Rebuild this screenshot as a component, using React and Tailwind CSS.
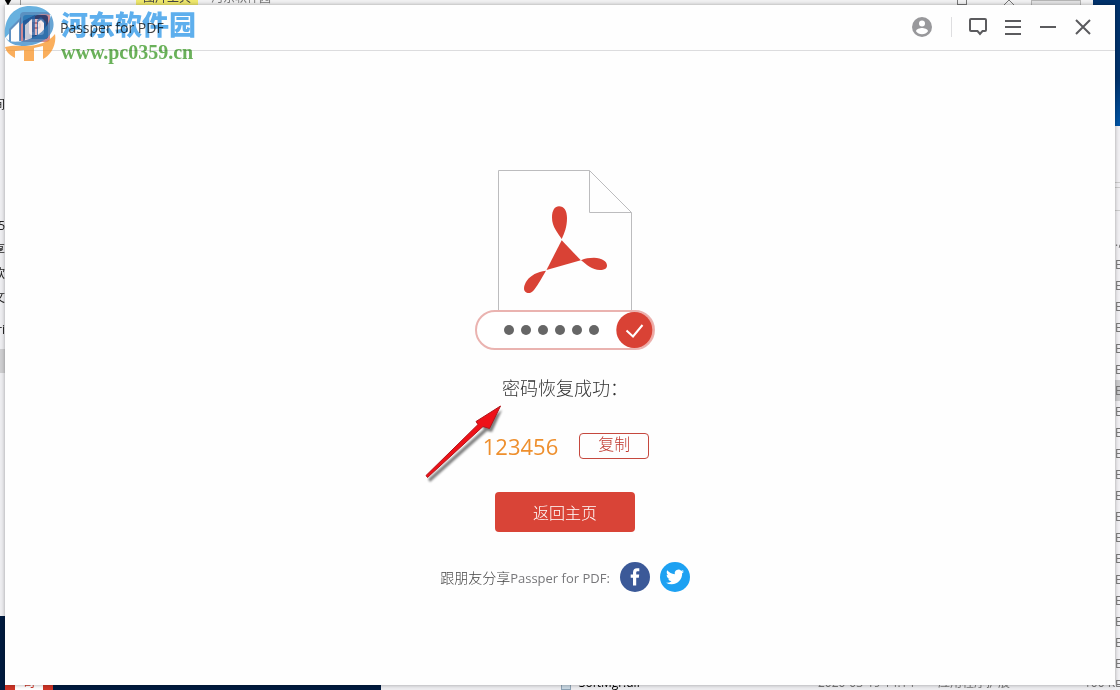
import React, { useState } from 'react';

const PASSWORD = '123456';

const leftFragments = [
  { text: '间', className: 'mt-[88px] h-6' },
  { text: '5', className: 'mt-[97px] h-6' },
  { text: '享', className: 'h-6' },
  { text: '软', className: 'h-6' },
  { text: '文', className: 'h-6' },
  { text: 'ri', className: 'mt-2 h-6' },
];

const sizeRows = Array.from({ length: 21 }, (_, i) => i);

const WindowButton = ({ label, children }) => (
  <button type="button" aria-label={label} className="flex h-[35px] w-[35px] items-center justify-center text-[#5b5b5e]">
    <svg width="20" height="20" viewBox="0 0 20 20" fill="none" stroke="currentColor" strokeWidth="2">
      {children}
    </svg>
  </button>
);

const AppLogo = () => (
  <svg width="30" height="30" viewBox="0 0 30 30" aria-hidden="true">
    <rect width="30" height="30" rx="4" fill="#cf8a93" />
    <rect x="3" y="3" width="25" height="24" rx="3" fill="#33406f" />
    <rect x="9" y="7" width="15" height="16" rx="3" fill="#e3b6bd" />
    <path d="M13 20V11h4.500a2.500 2.500 0 0 1 0 5H13" fill="none" stroke="#b5707f" strokeWidth="2" />
  </svg>
);

const TitleBar = () => (
  <header className="flex h-[46px] items-center border-b border-[#dcdcde] pr-[15px] pb-0.5 pl-[15px]">
    <AppLogo />
    <h1 className="ml-[10px] flex-1 pt-0.5 text-[14px] text-[#444]">Passper for PDF</h1>
    <button type="button" aria-label="Account" className="flex h-[35px] w-[35px] items-center justify-center">
      <svg width="20" height="20" viewBox="0 0 20 20">
        <circle cx="10" cy="10" r="10" fill="#98989b" />
        <circle cx="10" cy="6.500" r="3" fill="#fff" />
        <path d="M4 14.200C4 12 8 11 10 11s6 1 6 3.200C14.700 16.200 12.500 17.200 10 17.200S5.300 16.200 4 14.200Z" fill="#fff" />
      </svg>
    </button>
    <span className="mr-2 ml-3 h-5 w-px bg-[#dedee0]" />
    <WindowButton label="Feedback">
      <path d="M3 2h14a1 1 0 0 1 1 1v10a1 1 0 0 1-1 1h-2.500L12 17l-2.500-3H3a1 1 0 0 1-1-1V3a1 1 0 0 1 1-1Z" />
    </WindowButton>
    <WindowButton label="Menu">
      <path d="M2 4h16M2 10h16M2 17h16" />
    </WindowButton>
    <WindowButton label="Minimize">
      <path d="M2 10h16" />
    </WindowButton>
    <WindowButton label="Close">
      <path d="M3 3l14 14M17 3L3 17" />
    </WindowButton>
  </header>
);

const UnlockedPdf = () => (
  <svg width="180" height="180" viewBox="0 0 180 180" aria-hidden="true">
    <path d="M23.500 140V.5h91l42 42V140M114.500.5v42h42" fill="none" stroke="#bcbcbe" />
    <g fill="#d94235">
      <path d="M86.700 69C83 63 77 57 77 47.500C77 40 80 36.200 84 36.200C89 36.200 92 40.500 92 48C92 57 89.500 63 86.700 69Z" />
      <path d="M86.700 70.200L105.800 90.300L71.500 99.900Z" />
      <path d="M106 90.300C110 88.500 114 87.800 119 87.800C127 88 132 91.500 132 95.500C132 98.500 129.500 100 125 100C117 100 111.500 94.500 106 90.300Z" />
      <path d="M71 100.700C67 107.500 63.500 114 59 120C56.500 123.500 52.500 124 50.300 121.800C48 119.500 49 114.500 52 110.500C56 105 62 102 71 100.700Z" />
    </g>
    <rect x="1" y="141" width="178" height="38" rx="19" fill="#fff" stroke="#eab3b0" strokeWidth="2" />
    <g fill="#666">
      <circle cx="34" cy="160" r="5" />
      <circle cx="51" cy="160" r="5" />
      <circle cx="68" cy="160" r="5" />
      <circle cx="85" cy="160" r="5" />
      <circle cx="102" cy="160" r="5" />
      <circle cx="119" cy="160" r="5" />
    </g>
    <circle cx="161" cy="160" r="18" fill="#f0a7a2" />
    <circle cx="159.300" cy="160" r="18" fill="#d94235" />
    <path d="M151.500 160.500L158 166.500L167.500 155" fill="none" stroke="#fff" strokeWidth="2" />
  </svg>
);

const Arrow = () => (
  <svg className="absolute top-7 -left-[80px]" width="90" height="88" viewBox="0 0 90 88" aria-hidden="true">
    <defs>
      <filter id="soft">
        <feGaussianBlur stdDeviation="1.300" />
      </filter>
    </defs>
    <path d="M6 77L62 27L59 23L80 8L70 30L65 29L8 80Z" fill="#000" opacity=".5" filter="url(#soft)" />
    <path d="M4 73.500L56 22.500L54 19.500L78.500 4L67.500 26.500L61 24.500L5.500 75.500Z" fill="#ee1118" stroke="#b0161b" strokeWidth="1" />
  </svg>
);

const ShareLinks = () => (
  <div className="mt-[30px] flex items-center">
    <span className="pt-0.5 text-[13px] text-[#77777a]">
      <span className="text-[14px] font-light text-[#444]">跟朋友分享</span>Passper for PDF:
    </span>
    <a href="#facebook" aria-label="Facebook" className="ml-[10px]">
      <svg width="30" height="30" viewBox="0 0 30 30">
        <circle cx="15" cy="15" r="15" fill="#3b5998" />
        <path d="M13 23.500V15.800h-2.300V12.600H13v-2c0-2.900 1.500-4.300 4-4.300h2.300v3H17.700c-1.200 0-1.500.5-1.500 1.500v1.800h3l-.4 3.200h-2.600v7.700Z" fill="#fff" />
      </svg>
    </a>
    <a href="#twitter" aria-label="Twitter" className="ml-[10px]">
      <svg width="30" height="30" viewBox="0 0 30 30">
        <circle cx="15" cy="15" r="15" fill="#1da1f2" />
        <path
          transform="translate(6 6) scale(.75)"
          d="M23.950 4.570a10 10 0 0 1-2.820.77 4.960 4.960 0 0 0 2.160-2.720c-.95.550-2 .96-3.130 1.180a4.920 4.920 0 0 0-8.380 4.480C7.690 8.100 4.070 6.130 1.640 3.160a4.820 4.820 0 0 0-.67 2.480c0 1.710.87 3.210 2.190 4.100a4.900 4.900 0 0 1-2.230-.62v.06a4.920 4.920 0 0 0 3.950 4.830 5 5 0 0 1-2.210.08 4.940 4.940 0 0 0 4.600 3.420A9.870 9.870 0 0 1 0 19.540a13.990 13.990 0 0 0 7.550 2.210c9.050 0 14-7.500 14-13.980 0-.21 0-.42-.02-.63a9.940 9.940 0 0 0 2.460-2.550Z"
          fill="#fff"
        />
      </svg>
    </a>
  </div>
);

const ResultView = () => {
  const [copied, setCopied] = useState(false);

  const handleCopy = () => {
    navigator.clipboard?.writeText(PASSWORD);
    setCopied(true);
  };

  return (
    <main className="flex flex-1 flex-col items-center pt-[119px] pb-8 pl-[10px]">
      <UnlockedPdf />
      <div className="relative mt-6">
        <h2 className="text-[18px] leading-7 font-light text-[#333]">密码恢复成功：</h2>
        <Arrow />
      </div>
      <div className="mt-[31px] flex items-center gap-[21px] pl-0.5">
        <output className="text-[22px] leading-[26px] text-[#ee8f2d]">{PASSWORD}</output>
        <button
          type="button"
          onClick={handleCopy}
          aria-pressed={copied}
          className="flex h-[26px] w-[70px] items-center justify-center rounded border border-[#c5483e] pb-1 text-[16px] font-light text-[#c0372d]"
        >
          复制
        </button>
      </div>
      <button type="button" className="mt-[33px] h-10 w-[140px] rounded bg-[#d94437] pt-0.5 text-[16px] font-light text-white">
        返回主页
      </button>
      <ShareLinks />
    </main>
  );
};

const Watermark = () => (
  <div className="pointer-events-none absolute top-0 left-0 z-20 flex mix-blend-multiply" aria-hidden="true">
    <div className="h-[66px] w-[61px]" />
    <div className="flex flex-col pt-2">
      <span className="text-[27px] leading-[34px] font-black text-[#5eb0ee]">河东软件园</span>
      <span className="font-['Liberation_Serif',serif] text-[20px] leading-5 font-bold text-[#6ab25a]">www.pc0359.cn</span>
    </div>
  </div>
);

const WatermarkLogo = () => (
  <svg className="pointer-events-none absolute top-0 left-0 z-20" width="61" height="66" viewBox="0 0 61 66" aria-hidden="true">
    <g opacity=".72">
      <path d="M5 38C3 18 14 6 30 6C39 6 46 9 51 15C42 13 32 15 24 22C16 28 10 32 5 38Z" fill="#2f94d4" />
      <path d="M9 42V29L21 17V41ZM23 41V21L35 15V39ZM37 37V20L41 17L46 22V32Z" fill="#2266ab" />
      <path d="M11 42V30L19 22V41ZM25 41V25L32 19V39ZM38 36V22L41 20L44 23V32Z" fill="#fff" />
      <path d="M5 36C8 43 16 43 26 40C38 37 48 29 51 15C60 32 44 45 25 46C16 46 8 44 5 36Z" fill="#2f83c4" />
      <path d="M5 47C13 45 19 46 26 46C38 46 49 42 55 34C57 45 50 56 43 59V46L34 48V61H24V50L15 51V58C9 55 6 51 5 47Z" fill="#f9901f" />
    </g>
  </svg>
);

const TopStrip = () => (
  <div className="flex h-[5px] items-end overflow-hidden bg-[#f1f1f2] text-[12px] leading-[14px]">
    <span className="ml-1 w-4 text-[8px] leading-[6px] text-black">▼</span>
    <span className="h-full w-px bg-[#999]" />
    <span className="ml-[115px] w-[62px] bg-[#efe86c] pl-[7px] text-[#444]">图片工具</span>
    <span className="ml-[13px] flex-1 text-[#777]">河东软件园</span>
    <span className="mr-9 h-[10px] w-[10px] shrink-0 border border-[#777]" />
    <svg className="mr-4 shrink-0" width="12" height="5" viewBox="0 0 12 5">
      <path d="M1 5l5-5 5 5" fill="none" stroke="#777" />
    </svg>
    <span className="mr-3 h-full w-[50px] border-t border-r border-l border-[#b5b5b5] bg-[#e3e3e4]" />
    <span className="h-full w-[27px] bg-[#00326c]" />
  </div>
);

const LeftStrip = () => (
  <div className="flex w-[5px] flex-col items-end overflow-hidden bg-[#eeeef1] text-[12px] leading-6 text-[#222]">
    {leftFragments.map(item => (
      <span key={item.text} className={`shrink-0 whitespace-nowrap ${item.className}`}>{item.text}</span>
    ))}
    <span className="mt-[7px] h-6 w-full shrink-0 bg-[#cfcfd1]" />
    <span className="mt-[243px] w-full flex-1 bg-[#001b3f]" />
  </div>
);

const RightStrip = () => (
  <div className="flex w-[5px] flex-col overflow-hidden bg-[#f1f0f3] text-[12px] text-[#777]">
    <span className="h-[121px] shrink-0 bg-linear-to-b from-[#00326c] from-60% to-[#0056a8]" />
    <span className="mt-14 h-[6px] shrink-0 border-y border-[#ccc]" />
    <span className="mt-[22px] h-px shrink-0 bg-[#ccc]" />
    <span className="mt-[26px] mb-[7px] h-[10px] shrink-0 leading-[10px]">.,</span>
    <div className="h-0">
      {sizeRows.map(i => (
        <span key={i} className={i === 6 ? 'block h-[21px] bg-[#ccccce] leading-[21px]' : 'block h-[21px] leading-[21px]'}>E</span>
      ))}
    </div>
  </div>
);

const BottomStrip = () => (
  <div className="flex h-[5px] items-end overflow-hidden bg-[#ededf0] text-[12px] leading-[14px] whitespace-nowrap text-[#777]">
    <div className="flex h-full w-[34%] items-end bg-[#001b3f]">
      <span className="ml-[5px] flex h-full w-12 items-end justify-center bg-[#cf3527]">
        <span className="w-7 bg-white text-center text-[#cf3527]">司</span>
      </span>
    </div>
    <span className="ml-[180px] h-[10px] w-[10px] border border-[#8ea3b5] bg-[#c9d8e3]" />
    <span className="ml-2 flex-1 text-black">SoftMgr.dll</span>
    <span className="w-[120px]">2020-03-19 14:14</span>
    <span className="w-[146px]">应用程序扩展</span>
    <span className="w-9">100 KB</span>
  </div>
);

const App = () => (
  <div className="relative flex min-h-screen flex-col bg-[#f1f1f2] font-['Open_Sans','Noto_Sans_CJK_SC',sans-serif]">
    <TopStrip />
    <div className="flex flex-1">
      <LeftStrip />
      <div className="relative z-10 flex flex-1 flex-col bg-[#fefefe] shadow-[0_0_4px_rgba(0,0,0,0.35)]">
        <TitleBar />
        <ResultView />
      </div>
      <RightStrip />
    </div>
    <BottomStrip />
    <Watermark />
    <WatermarkLogo />
  </div>
);

export default App;
